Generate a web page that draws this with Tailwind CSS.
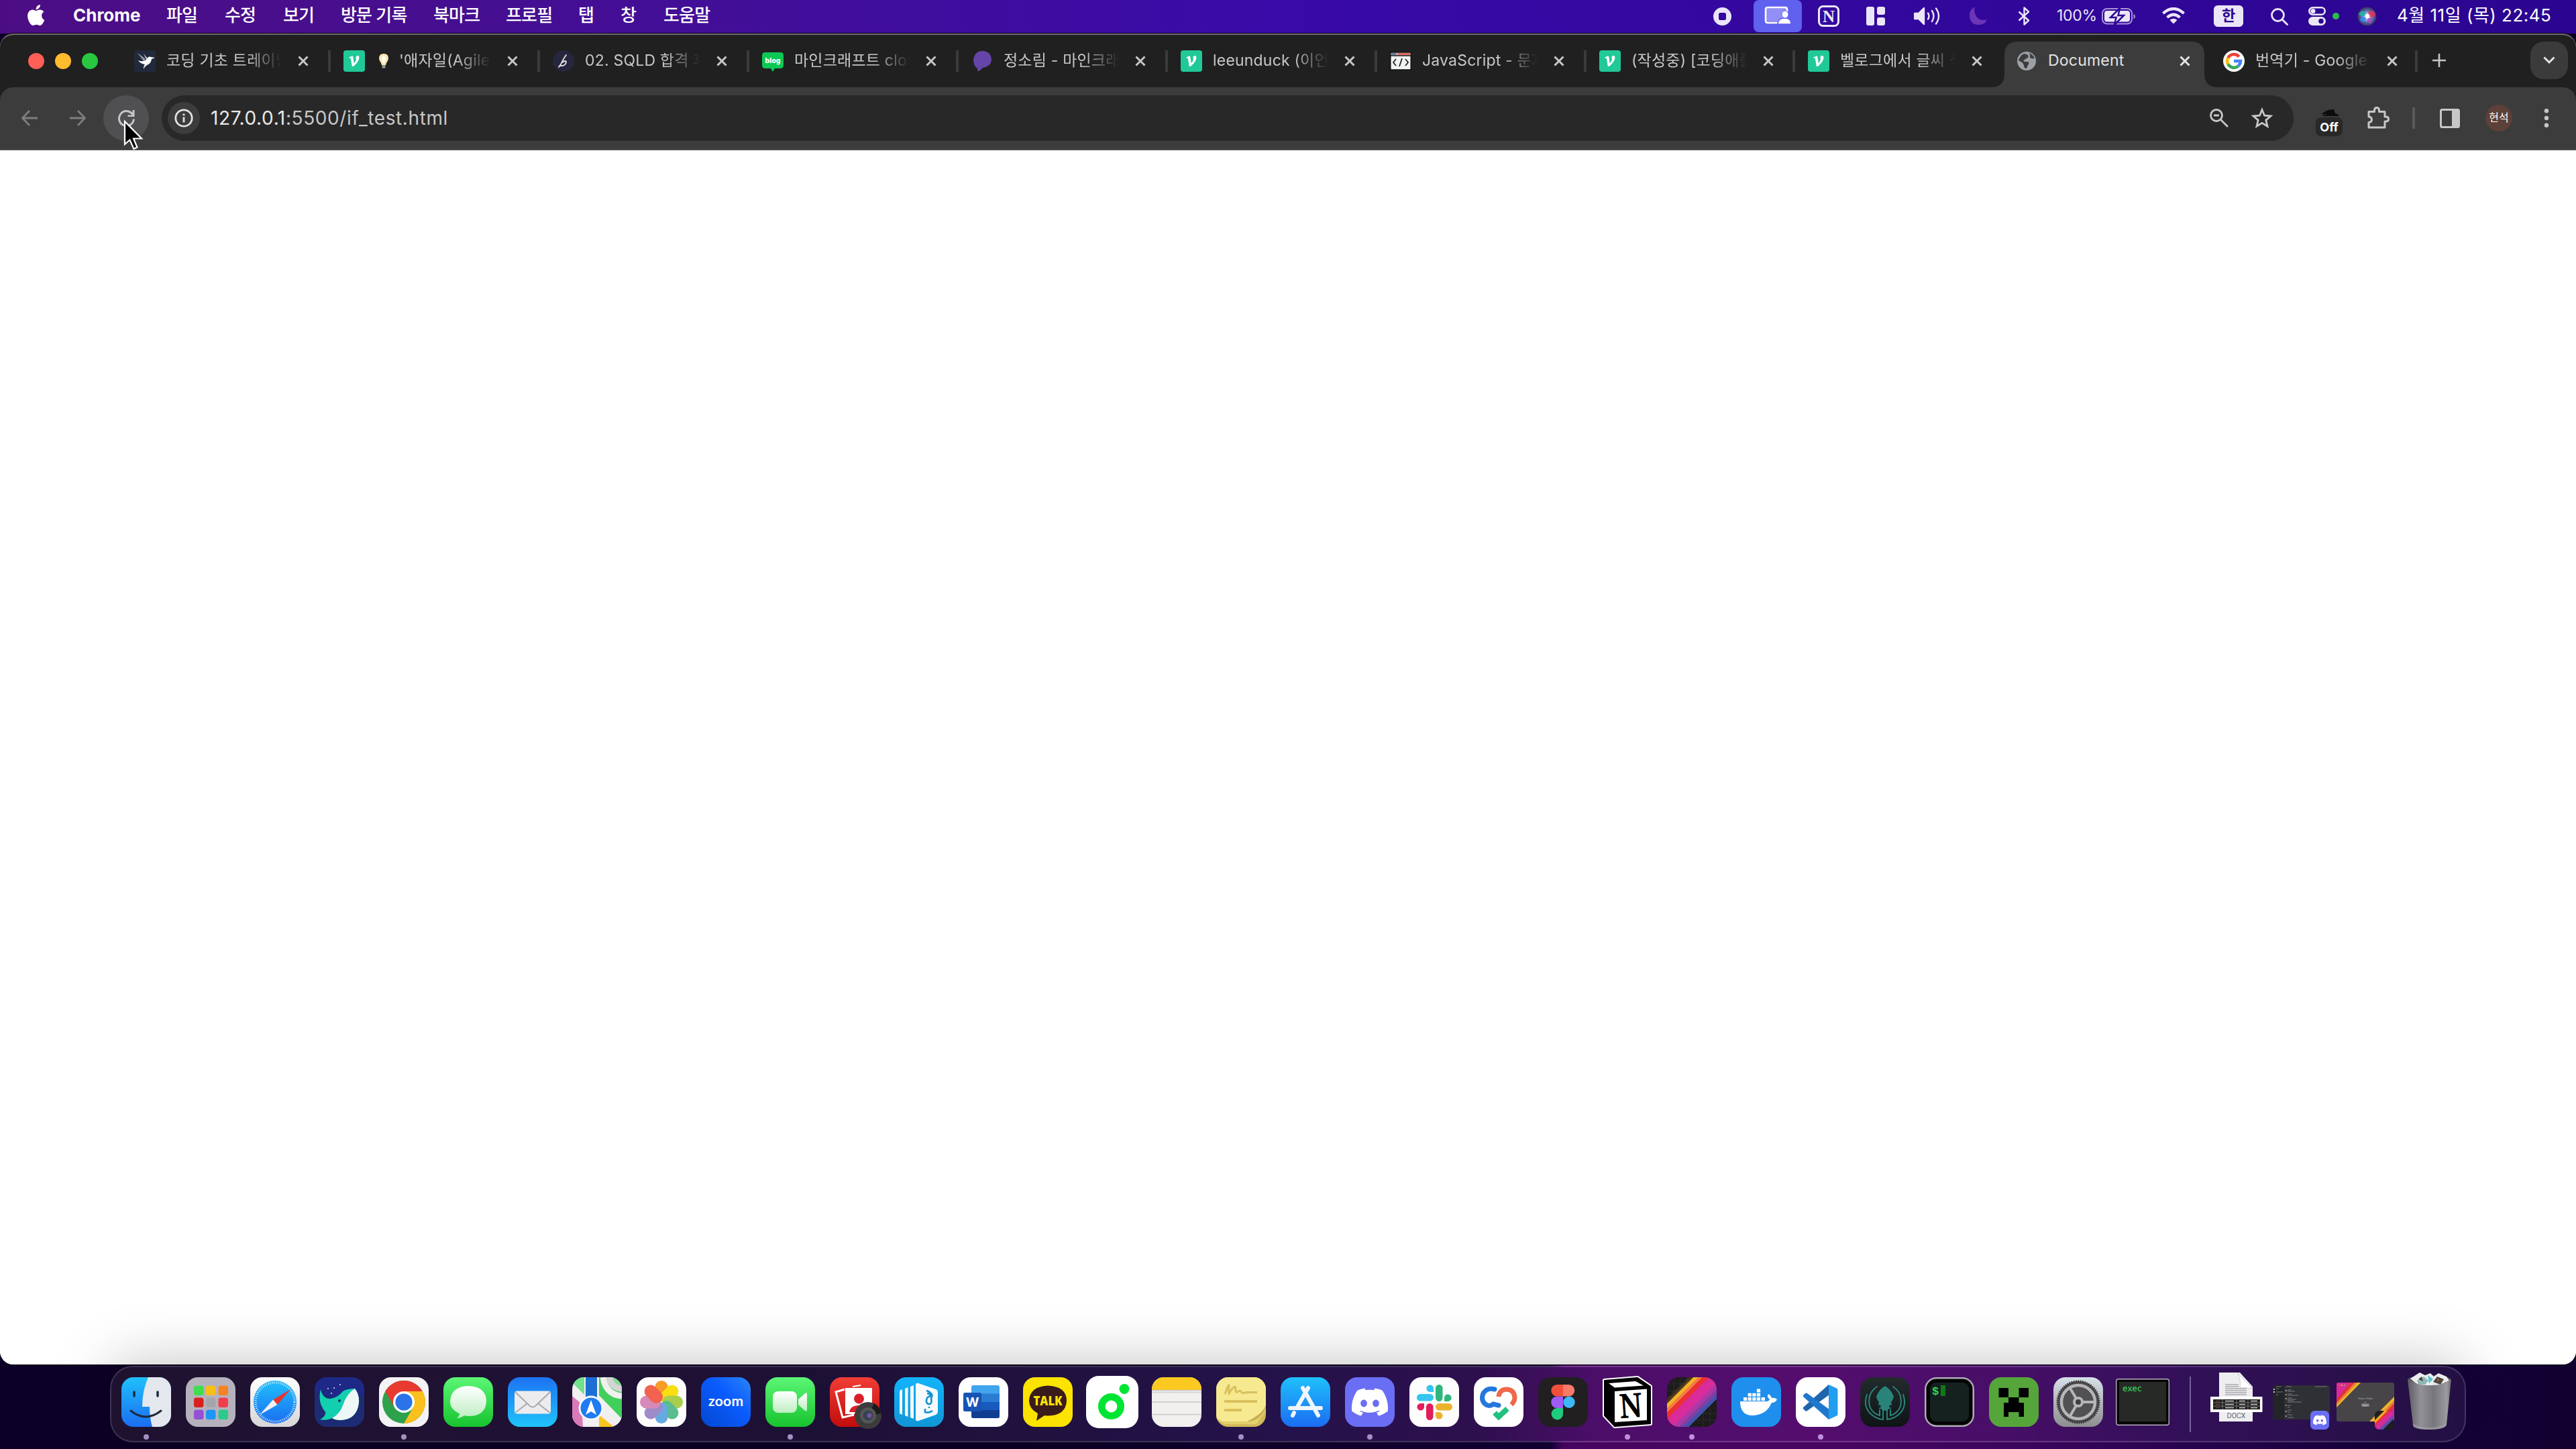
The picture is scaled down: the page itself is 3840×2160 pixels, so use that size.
<!DOCTYPE html>
<html lang="ko">
<head>
    <meta charset="UTF-8">
    <meta name="viewport" content="width=device-width, initial-scale=1.0">
    <title>Document</title>
    <script src="https://cdn.jsdelivr.net/npm/@tailwindcss/browser@4"></script>
</head>
<body class="relative flex flex-col w-[3840px] h-[2160px] overflow-hidden bg-[#0d0027] font-['Inter','Noto_Sans_CJK_KR',sans-serif]">

    <!-- Shared symbols -->
    <svg class="hidden">
        <symbol id="close" viewBox="0 0 16 16"><path d="M1.5 1.5 14.5 14.5M14.5 1.5 1.5 14.5" fill="none" stroke="currentColor" stroke-width="3"/></symbol>
        <symbol id="velog" viewBox="0 0 32 32"><rect width="32" height="32" rx="4" fill="#20c997"/><path d="M8.5 10.500 12.600 8.500Q14 8.200 14.300 9.800L15.800 19.500Q19.800 14.600 18.600 11Q18.400 8.200 21 8Q23.800 8.200 23.400 11.600Q22.600 17.600 14.800 24L12.800 24L10.800 11.700L8.500 11.700Z" fill="#fff"/></symbol>
        <symbol id="discord" viewBox="0 0 24 24"><path fill="#fff" d="M20.317 4.3698a19.7913 19.7913 0 00-4.8851-1.5152.0741.0741 0 00-.0785.0371c-.211.3753-.4447.8648-.6083 1.2495-1.8447-.2762-3.68-.2762-5.4868 0-.1636-.3933-.4058-.8742-.6177-1.2495a.077.077 0 00-.0785-.037 19.7363 19.7363 0 00-4.8852 1.515.0699.0699 0 00-.0321.0277C.5334 9.0458-.319 13.5799.0992 18.0578a.0824.0824 0 00.0312.0561c2.0528 1.5076 4.0413 2.4228 5.9929 3.0294a.0777.0777 0 00.0842-.0276c.4616-.6304.8731-1.2952 1.226-1.9942a.076.076 0 00-.0416-.1057c-.6528-.2476-1.2743-.5495-1.8722-.8923a.077.077 0 01-.0076-.1277c.1258-.0943.2517-.1923.3718-.2914a.0743.0743 0 01.0776-.0105c3.9278 1.7933 8.18 1.7933 12.0614 0a.0739.0739 0 01.0785.0095c.1202.099.246.1981.3728.2924a.077.077 0 01-.0066.1276 12.2986 12.2986 0 01-1.873.8914.0766.0766 0 00-.0407.1067c.3604.698.7719 1.3628 1.225 1.9932a.076.076 0 00.0842.0286c1.961-.6067 3.9495-1.5219 6.0023-3.0294a.077.077 0 00.0313-.0552c.5004-5.177-.8382-9.6739-3.5485-13.6604a.061.061 0 00-.0312-.0286zM8.02 15.3312c-1.1825 0-2.1569-1.0857-2.1569-2.419 0-1.3332.9555-2.4189 2.157-2.4189 1.2108 0 2.1757 1.0952 2.1568 2.419 0 1.3332-.9555 2.4189-2.1569 2.4189zm7.9748 0c-1.1825 0-2.1569-1.0857-2.1569-2.419 0-1.3332.9554-2.4189 2.1569-2.4189 1.2108 0 2.1757 1.0952 2.1568 2.419 0 1.3332-.946 2.4189-2.1568 2.4189Z"/></symbol>
        <symbol id="stripes" viewBox="0 0 74 74"><rect width="74" height="74" fill="#1d1b1c"/><path d="M0 10H74M0 20H74M0 30H74M0 54H74M0 64H74M10 0V74M20 0V74M30 0V74M54 0V74M64 0V74" stroke="#333" stroke-width=".7"/><rect width="74" height="74" fill="url(#g-stripes)"/></symbol>
        <symbol id="petal" viewBox="0 0 74 74"><rect x="27.500" y="5" width="19" height="31" rx="9.500"/></symbol>
    </svg>
    <svg class="absolute size-0">
        <defs>
            <linearGradient id="g-stripes" gradientUnits="userSpaceOnUse" x1="0" y1="0" x2="74" y2="74">
                <stop offset=".2" stop-color="#f4a020" stop-opacity="0"/><stop offset=".265" stop-color="#f4a020" stop-opacity=".3"/>
                <stop offset=".265" stop-color="#f3b327"/><stop offset=".315" stop-color="#f3b327"/>
                <stop offset=".315" stop-color="#f27c3d"/><stop offset=".355" stop-color="#f27c3d"/>
                <stop offset=".355" stop-color="#ea2f35"/><stop offset=".425" stop-color="#ea2f35"/>
                <stop offset=".425" stop-color="#d92b97"/><stop offset=".56" stop-color="#d82d9e"/>
                <stop offset=".56" stop-color="#b236a4"/><stop offset=".62" stop-color="#a63aa5"/>
                <stop offset=".62" stop-color="#8040a4"/><stop offset=".67" stop-color="#7343a5"/>
                <stop offset=".67" stop-color="#4550ab"/><stop offset=".72" stop-color="#3c55ae"/>
                <stop offset=".72" stop-color="#3c55ae" stop-opacity="0"/>
            </linearGradient>
            <linearGradient id="g-blue" x2="0" y2="1"><stop stop-color="#1fc0fb"/><stop offset="1" stop-color="#1b6df2"/></linearGradient>
            <linearGradient id="g-mail" x2="0" y2="1"><stop stop-color="#1d72f2"/><stop offset="1" stop-color="#20c4fb"/></linearGradient>
            <linearGradient id="g-green" x2="0" y2="1"><stop stop-color="#5bf675"/><stop offset="1" stop-color="#18c32f"/></linearGradient>
            <linearGradient id="g-white" x2="0" y2="1"><stop stop-color="#fff"/><stop offset="1" stop-color="#d6d6d8"/></linearGradient>
            <linearGradient id="g-bubble" x2="0" y2="1"><stop stop-color="#fff"/><stop offset="1" stop-color="#bdeec1"/></linearGradient>
            <linearGradient id="g-red" x2="0" y2="1"><stop stop-color="#f03d35"/><stop offset="1" stop-color="#c20d0d"/></linearGradient>
            <linearGradient id="g-book" x2="0" y2="1"><stop stop-color="#14b3fb"/><stop offset="1" stop-color="#1196d6"/></linearGradient>
            <linearGradient id="g-zoom" x1="1" x2="0" y2="1"><stop stop-color="#2a86f5"/><stop offset=".4" stop-color="#0b5cff"/><stop offset="1" stop-color="#0347cf"/></linearGradient>
            <linearGradient id="g-dark" x2="0" y2="1"><stop stop-color="#232b2d"/><stop offset="1" stop-color="#0f1416"/></linearGradient>
            <linearGradient id="g-gear" x2="0" y2="1"><stop stop-color="#d6dfe8"/><stop offset="1" stop-color="#8e8e90"/></linearGradient>
            <linearGradient id="g-trash"><stop stop-color="#5f5f62"/><stop offset=".3" stop-color="#98989b"/><stop offset=".6" stop-color="#7b7b7e"/><stop offset=".9" stop-color="#a2a2a5"/><stop offset="1" stop-color="#6b6b6e"/></linearGradient>
            <radialGradient id="g-siri"><stop stop-color="#fff"/><stop offset=".25" stop-color="#d9c4ee"/><stop offset=".6" stop-color="#5a6fb8"/><stop offset="1" stop-color="#3b3357"/></radialGradient>
        </defs>
    </svg>

    <!-- Menu bar -->
    <header class="flex h-[50px] shrink-0 bg-gradient-to-r from-[#4c0d84] via-[#390aa8] to-[#2b0590] text-[26px] leading-[46px] text-white">
        <div class="flex flex-1 pl-[41px] font-medium">
            <svg class="w-[68px] h-[31px] mt-[7px]" viewBox="2.200 0 52.600 24"><path fill="#fff" d="M12.152 6.896c-.948 0-2.415-1.078-3.96-1.04-2.04.027-3.91 1.183-4.961 3.014-2.117 3.675-.546 9.103 1.519 12.09 1.013 1.454 2.208 3.09 3.792 3.039 1.52-.065 2.09-.987 3.935-.987 1.831 0 2.35.987 3.96.948 1.637-.026 2.676-1.48 3.676-2.948 1.156-1.688 1.636-3.325 1.662-3.415-.039-.013-3.182-1.221-3.22-4.857-.026-3.04 2.48-4.494 2.597-4.559-1.429-2.09-3.623-2.324-4.39-2.376-2-.156-3.675 1.09-4.61 1.09zM15.53 3.83c.843-1.012 1.4-2.427 1.245-3.83-1.207.052-2.662.805-3.532 1.818-.78.896-1.454 2.338-1.273 3.714 1.338.104 2.715-.688 3.559-1.701"/></svg>
            <span class="w-[139px] font-bold">Chrome</span>
            <span class="w-[87px] tracking-[-0.8px]">파일</span>
            <span class="w-[87px] tracking-[-0.8px]">수정</span>
            <span class="w-[86px] tracking-[-0.8px]">보기</span>
            <span class="w-[138px] tracking-[-0.8px]">방문 기록</span>
            <span class="w-[108px] tracking-[-0.8px]">북마크</span>
            <span class="w-[108px] tracking-[-0.8px]">프로필</span>
            <span class="w-[63px]">탭</span>
            <span class="w-[64px]">창</span>
            <span class="tracking-[-0.8px]">도움말</span>
        </div>
        <div class="flex w-[1286px]">
            <svg class="w-[27px] h-[27px] mt-[11px]" viewBox="0 0 27 27"><path fill="#ebe6f7" fill-rule="evenodd" d="M13.500 0a13.500 13.500 0 1 1 0 27a13.500 13.500 0 1 1 0-27ZM10.500 8Q8 8 8 10.500V16.500Q8 19 10.500 19H16.500Q19 19 19 16.500V10.500Q19 8 16.500 8Z"/></svg>
            <div class="flex justify-center w-[72px] h-12 ml-[33px] pt-[9px] rounded-lg bg-[#6061ee]">
                <svg class="w-10 h-7" viewBox="0 0 40 28"><path d="M20 25H5Q2 25 2 22V5Q2 2 5 2H31Q34 2 34 5V8" fill="#928ff5" stroke="#fff" stroke-width="2.600"/><path d="M5 4H31V24H5Z" fill="#928ff5"/><path d="M20 27Q20 18 31 18Q40 18 40 27Z" fill="#fff" stroke="#6061ee" stroke-width="1.500"/><ellipse cx="31" cy="12.500" rx="5" ry="5.500" fill="#fff" stroke="#6061ee"/></svg>
            </div>
            <svg class="w-8 h-8 ml-6 mt-2" viewBox="0 0 32 32"><rect x="1.500" y="1.500" width="29" height="29" rx="6" fill="none" stroke="#ebe6f7" stroke-width="3"/><text x="16" y="24.500" text-anchor="middle" font-family="Liberation Serif" font-weight="bold" font-size="25" fill="#ebe6f7">N</text></svg>
            <svg class="w-7 h-7 ml-10 mt-[10px]" viewBox="0 0 28 28" fill="#ebe6f7"><rect width="12" height="28" rx="3"/><rect x="16" width="12" height="12" rx="3"/><rect x="16" y="16" width="12" height="12" rx="3"/></svg>
            <svg class="w-[39px] h-7 ml-[43px] mt-[10px]" viewBox="0 0 39 28" fill="none" stroke="#ebe6f7" stroke-width="2.400" stroke-linecap="round"><path d="M1 10H7L15 2V26L7 18H1Z" fill="#ebe6f7" stroke-linejoin="round"/><path d="M21 9.500Q24 14 21 18.500M27 6Q32 14 27 22M33 2.500Q41 14 33 25.500"/></svg>
            <svg class="w-[27px] h-7 ml-[43px] mt-[10px]" viewBox="0 0 27 28"><path d="M9 0Q0 5 1 14Q2 27 15 27Q24 27 27 19Q17 22 11.500 15Q6.500 8 9 0Z" fill="#6b35b5"/></svg>
            <svg class="w-[19px] h-7 ml-[46px] mt-[10px]" viewBox="0 0 19 28"><path d="M1.500 7.500 16 20.500 9.500 26.500V1.500L16 7.500 1.500 20.500" fill="none" stroke="#ebe6f7" stroke-width="2.400" stroke-linejoin="round"/></svg>
            <span class="w-[58px] ml-[39px] text-[23px] tracking-[-0.3px] text-[#ebe6f7] whitespace-nowrap">100%</span>
            <svg class="w-[51px] h-[25px] ml-[9px] mt-[12px]" viewBox="0 0 51 25"><rect x="1" y="1" width="44" height="22.500" rx="7" fill="none" stroke="#a893d8" stroke-width="2"/><rect x="4" y="4" width="38" height="16.500" rx="4" fill="#ebe6f7"/><path d="M47.500 8.500Q50 10 50 12.500T47.500 16.500Z" fill="#a893d8"/><path d="M27 0 13 14H21.500L19 25 33 11H24.500Z" fill="#ebe6f7" stroke="#2d0594" stroke-width="2.500"/></svg>
            <svg class="w-[34px] h-[25px] ml-[39px] mt-[11px]" viewBox="0 0 34 25" fill="none" stroke="#ebe6f7" stroke-width="4.200"><path d="M1.500 9Q17-5 32.500 9M7.500 15Q17 6.500 26.500 15"/><path d="M17 24.500 11.500 19Q17 14.500 22.500 19Z" fill="#ebe6f7" stroke="none"/></svg>
            <span class="w-11 h-8 ml-[43px] mt-2 rounded-md bg-[#ebe6f7] text-center text-[22px] leading-[31px] font-bold text-[#2b0590]">한</span>
            <svg class="w-[26px] h-[26px] ml-[41px] mt-[12px]" viewBox="0 0 26 26" fill="none" stroke="#ebe6f7" stroke-width="2.800" stroke-linecap="round"><circle cx="10.500" cy="10.500" r="9"/><path d="M17 17 24.500 24.500"/></svg>
            <svg class="w-[26px] h-7 ml-[30px] mt-[10px]" viewBox="0 0 26 28"><rect x="1.300" y="1.300" width="23.400" height="10.400" rx="5.200" fill="none" stroke="#ebe6f7" stroke-width="2.600"/><circle cx="7" cy="6.500" r="3.500" fill="#ebe6f7"/><rect y="15" width="26" height="13" rx="6.500" fill="#ebe6f7"/><circle cx="19" cy="21.500" r="3.800" fill="#2b0590"/></svg>
            <span class="size-[10px] ml-[10px] mt-[19px] rounded-full bg-[#2bbd4a]"></span>
            <svg class="size-[29px] ml-[27px] mt-[10px]" viewBox="0 0 29 29"><circle cx="14.500" cy="14.500" r="14" fill="url(#g-siri)"/><path d="M2 11Q8 1 15 13Q6 16 2 11Z" fill="#1fb3a4" opacity=".9"/><path d="M14 13Q20 1 26 9Q29 19 14 14Z" fill="#e0365f" opacity=".9"/><path d="M14 15Q10 28 4 20Q5 14 14 15Z" fill="#318af2" opacity=".85"/><path d="M15 15Q26 17 20 25Q14 25 15 15Z" fill="#a848c4" opacity=".8"/><circle cx="15" cy="14" r="3.500" fill="#fff"/></svg>
            <span class="ml-[30px] tracking-[0.5px] whitespace-nowrap">4월 11일 (목) 22:45</span>
        </div>
    </header>

    <!-- Browser window -->
    <main class="flex flex-col h-[1984px] shrink-0 overflow-hidden rounded-[20px] border-t-2 border-[#6d6a72] bg-white shadow-[0_0_0_1px_#0a0512]">
        <div class="flex flex-col shrink-0 h-[172px] bg-[#202020]">
            <div class="flex h-[78px] text-[23px] tracking-[0.2px] text-[#c7c7c7]">
                <div class="flex gap-4 w-[179px] pl-[42px] pt-[27px]">
                    <span class="size-6 rounded-full bg-[#ff5f57]"></span>
                    <span class="size-6 rounded-full bg-[#febc2e]"></span>
                    <span class="size-6 rounded-full bg-[#28c840]"></span>
                </div>

                <div class="flex items-center w-[312px] h-[77px] pl-[21px]">
                    <svg class="size-8 shrink-0" viewBox="0 0 32 32"><rect width="32" height="32" rx="4" fill="#212a3c"/><path d="M5 4 16 12Q17 15 14 16Z" fill="#8e959f"/><path d="M14 5 20 12 18 14Z" fill="#b9bec5"/><path d="M6 15Q13 18 18 14Q21 8 25 10L31 11L26 13Q25 20 19 22Q16 24 14 28Q14 23 16 21Q9 20 6 15Z" fill="#fff"/></svg>
                    <span class="w-[172px] ml-4 overflow-hidden whitespace-nowrap [mask-image:linear-gradient(to_right,black_70%,transparent)]">코딩 기초 트레이닝</span>
                    <svg class="size-4 ml-[24px]"><use href="#close"/></svg>
                    <span class="w-1 h-8 ml-auto mr-[-2px] bg-[#3b3b3b]"></span>
                </div>
                <div class="flex items-center w-[312px] h-[77px] pl-[21px]">
                    <svg class="size-8 shrink-0"><use href="#velog"/></svg>
                    <span class="flex items-center w-[172px] ml-4 overflow-hidden whitespace-nowrap [mask-image:linear-gradient(to_right,black_70%,transparent)]">
                        <svg class="w-[24px] h-6 mr-[11px] shrink-0" viewBox="0 0 24 24"><path d="M12 1Q19 1 19 8Q19 11 16 15L15 18H9L8 15Q5 11 5 8Q5 1 12 1Z" fill="#fde7b0"/><path d="M12 4Q15 5 15 9L13 15H11L9 9Q9 5 12 4Z" fill="#fffdf2"/><path d="M9.500 18H14.500V22Q12 24 9.500 22Z" fill="#8f8f8f"/></svg>
                        '애자일(Agile)
                    </span>
                    <svg class="size-4 ml-[24px]"><use href="#close"/></svg>
                    <span class="w-1 h-8 ml-auto mr-[-2px] bg-[#3b3b3b]"></span>
                </div>
                <div class="flex items-center w-[312px] h-[77px] pl-[21px]">
                    <svg class="size-8 shrink-0" viewBox="0 0 32 32"><circle cx="16" cy="16" r="16" fill="#26263f"/><path d="M20 7Q16 12 11 23Q18 24 20 18Q20 14 14 18M9 25 11 22" fill="none" stroke="#e6e6ea" stroke-width="1.800" stroke-linecap="round"/></svg>
                    <span class="w-[172px] ml-4 overflow-hidden whitespace-nowrap [mask-image:linear-gradient(to_right,black_70%,transparent)]">02. SQLD 합격 후기</span>
                    <svg class="size-4 ml-[24px]"><use href="#close"/></svg>
                    <span class="w-1 h-8 ml-auto mr-[-2px] bg-[#3b3b3b]"></span>
                </div>
                <div class="flex items-center w-[312px] h-[77px] pl-[21px]">
                    <svg class="size-8 shrink-0" viewBox="0 0 32 32"><path d="M5 3H27Q32 3 32 8V22Q32 27 27 27H19L16 32 13 27H5Q0 27 0 22V8Q0 3 5 3Z" fill="#0cc854"/><text x="16" y="19" text-anchor="middle" font-family="Inter" font-weight="800" font-size="10.500" letter-spacing="0" fill="#fff">blog</text></svg>
                    <span class="w-[172px] ml-4 overflow-hidden whitespace-nowrap [mask-image:linear-gradient(to_right,black_70%,transparent)]">마인크래프트 clone</span>
                    <svg class="size-4 ml-[24px]"><use href="#close"/></svg>
                    <span class="w-1 h-8 ml-auto mr-[-2px] bg-[#3b3b3b]"></span>
                </div>
                <div class="flex items-center w-[312px] h-[77px] pl-[21px]">
                    <svg class="size-8 shrink-0" viewBox="0 0 32 32"><path d="M17 1Q30 2 30 15Q29 24 17 26Q13 31 9 31L9 27Q3 23 3 14Q5 1 17 1Z" fill="#6645a8"/></svg>
                    <span class="w-[172px] ml-4 overflow-hidden whitespace-nowrap [mask-image:linear-gradient(to_right,black_70%,transparent)]">정소림 - 마인크래프트</span>
                    <svg class="size-4 ml-[24px]"><use href="#close"/></svg>
                    <span class="w-1 h-8 ml-auto mr-[-2px] bg-[#3b3b3b]"></span>
                </div>
                <div class="flex items-center w-[312px] h-[77px] pl-[21px]">
                    <svg class="size-8 shrink-0"><use href="#velog"/></svg>
                    <span class="w-[172px] ml-4 overflow-hidden whitespace-nowrap [mask-image:linear-gradient(to_right,black_70%,transparent)]">leeunduck (이언덕)</span>
                    <svg class="size-4 ml-[24px]"><use href="#close"/></svg>
                    <span class="w-1 h-8 ml-auto mr-[-2px] bg-[#3b3b3b]"></span>
                </div>
                <div class="flex items-center w-[312px] h-[77px] pl-[21px]">
                    <svg class="size-8 shrink-0" viewBox="0 0 32 32"><rect x=".7" y="3" width="30.600" height="26" rx="1.500" fill="#f2f4f4" stroke="#0c1015" stroke-width="1.600"/><path d="M1.500 4H10V7H1.500Z" fill="#6f7f91"/><path d="M11 4H30.500V7H11Z" fill="#e26a63"/><path d="M0 8H32" stroke="#0c1015" stroke-width="1.500"/><path d="M9 13 5 18 9 23M23 13 27 18 23 23M18 12 14 24" fill="none" stroke="#222" stroke-width="1.800"/></svg>
                    <span class="w-[172px] ml-4 overflow-hidden whitespace-nowrap [mask-image:linear-gradient(to_right,black_70%,transparent)]">JavaScript - 문자열</span>
                    <svg class="size-4 ml-[24px]"><use href="#close"/></svg>
                    <span class="w-1 h-8 ml-auto mr-[-2px] bg-[#3b3b3b]"></span>
                </div>
                <div class="flex items-center w-[312px] h-[77px] pl-[21px]">
                    <svg class="size-8 shrink-0"><use href="#velog"/></svg>
                    <span class="w-[172px] ml-4 overflow-hidden whitespace-nowrap [mask-image:linear-gradient(to_right,black_70%,transparent)]">(작성중) [코딩애플]</span>
                    <svg class="size-4 ml-[24px]"><use href="#close"/></svg>
                    <span class="w-1 h-8 ml-auto mr-[-1px] bg-[#3b3b3b]"></span>
                </div>
                <div class="flex items-center w-[309px] h-[77px] pl-[20px]">
                    <svg class="size-8 shrink-0"><use href="#velog"/></svg>
                    <span class="w-[172px] ml-4 overflow-hidden whitespace-nowrap [mask-image:linear-gradient(to_right,black_70%,transparent)]">벨로그에서 글씨 색</span>
                    <svg class="size-4 ml-[24px]"><use href="#close"/></svg>
                </div>
                <!-- Active tab -->
                <div class="relative flex items-center w-[309px] h-[77px] pl-[21px] text-[#e3e3e3]">
                    <svg class="absolute left-[-16px] top-[10px] w-[342px] h-[68px]" viewBox="0 0 342 68"><path d="M0 68Q20 68 20 48V20Q20 0 40 0H298Q318 0 318 20V48Q318 68 338 68Z" fill="#3c3c3c"/></svg>
                    <svg class="relative size-8 shrink-0" viewBox="0 0 32 32"><circle cx="16" cy="16" r="14" fill="#9aa0a6"/><path d="M6 11Q8 6 13 5L18 7Q20 10 16 12L13 14Q10 15 13 17L18 17Q21 19 18 22L16 27Q12 27 12 23Q12 20 9 18L4 15Q4 13 6 11ZM20 4Q25 6 28 12Q24 13 21 11Q22 8 20 4Z" fill="#3c3c3c"/></svg>
                    <span class="relative w-[172px] ml-4 overflow-hidden whitespace-nowrap">Document</span>
                    <svg class="relative size-4 ml-[24px]"><use href="#close"/></svg>
                </div>
                <div class="flex items-center w-[309px] h-[77px] pl-[21px]">
                    <svg class="size-8 shrink-0" viewBox="0 0 32 32"><circle cx="16" cy="16" r="16" fill="#fff"/><g fill="none" stroke-width="4.500"><path d="M23.800 9.500A10 10 0 0 0 7.300 11.300" stroke="#ea4335"/><path d="M7.300 11.300A10 10 0 0 0 7.300 20.700" stroke="#fbbc05"/><path d="M7.300 20.700A10 10 0 0 0 22.500 23.500" stroke="#34a853"/><path d="M22.500 23.500A10 10 0 0 0 26 16H16" stroke="#4285f4"/></g></svg>
                    <span class="w-[172px] ml-4 overflow-hidden whitespace-nowrap [mask-image:linear-gradient(to_right,black_70%,transparent)]">번역기 - Google 검색</span>
                    <svg class="size-4 ml-[24px]"><use href="#close"/></svg>
                    <span class="w-1 h-8 ml-auto mr-[-2px] bg-[#3b3b3b]"></span>
                </div>
                <svg class="size-5 ml-[24px] mt-[28px]" viewBox="0 0 20 20"><path d="M10 0V20M0 10H20" stroke="#c7c7c7" stroke-width="2.600"/></svg>
                <div class="flex items-center justify-center size-14 ml-auto mr-3 mt-[10px] rounded-[20px] bg-[#3b3b3b]">
                    <svg class="w-[18px] h-3" viewBox="0 0 18 12"><path d="M1.500 1.500 9 9 16.500 1.500" fill="none" stroke="#e3e3e3" stroke-width="3"/></svg>
                </div>
            </div>

            <!-- Toolbar -->
            <div class="flex items-center h-[94px] rounded-t-[20px] border-b-2 border-[#474747] bg-[#3c3c3c]">
                <svg class="w-6 h-6 ml-8" viewBox="0 0 24 24"><path d="M12 1 1.500 12 12 23M1.500 12H24" fill="none" stroke="#7d7d7d" stroke-width="2.800"/></svg>
                <svg class="w-6 h-6 ml-12" viewBox="0 0 24 24"><path d="M12 1 22.500 12 12 23M22.500 12H0" fill="none" stroke="#7d7d7d" stroke-width="2.800"/></svg>
                <div class="flex items-center justify-center size-[68px] ml-[26px] rounded-full bg-[#505052]">
                    <svg class="size-[27px]" viewBox="0 0 27 27"><path d="M23 8A11 11 0 1 0 24.500 14.500" fill="none" stroke="#c7c7c7" stroke-width="3"/><path d="M25.500 1V11H15.500V8.500H22.500V1Z" fill="#c7c7c7"/></svg>
                </div>
                <div class="flex items-center w-[3178px] h-[68px] ml-[19px] pl-[9px] rounded-full bg-[#282828]">
                    <div class="flex items-center justify-center size-12 rounded-full bg-[#3c3c3c]">
                        <svg class="size-7" viewBox="0 0 28 28"><circle cx="14" cy="14" r="12.200" fill="none" stroke="#e3e3e3" stroke-width="2.800"/><path d="M14 12.500V20.500M14 7.500V10.300" stroke="#e3e3e3" stroke-width="2.800"/></svg>
                    </div>
                    <span class="ml-4 text-[28px] tracking-[0.6px] text-[#c7c7c7]"><span class="text-[#e8e8e8]">127.0.0.1</span>:5500/if_test.html</span>
                    <svg class="size-7 ml-auto" viewBox="0 0 28 28" fill="none" stroke="#c7c7c7" stroke-width="2.800"><circle cx="10" cy="10" r="8.500"/><path d="M16 16 27 27M6 10H14"/></svg>
                    <svg class="size-8 ml-[34px] mr-[31px]" viewBox="0 0 32 32"><path d="M16 3.500 19.600 12.200 29 13 21.800 19.100 24 28.300 16 23.300 8 28.300 10.200 19.100 3 13 12.400 12.200Z" fill="none" stroke="#c7c7c7" stroke-width="2.800"/></svg>
                </div>
                <svg class="w-10 h-11 ml-[33px] mt-[13px]" viewBox="0 0 40 44"><path d="M9 10Q14 2 27 2L29 8 34 10V12H9L18 9Z" fill="#0c0c0c"/><rect y="14" width="40" height="28" rx="8" fill="#282828"/><text x="20" y="35" text-anchor="middle" font-family="Inter" font-weight="700" font-size="18" fill="#fff">Off</text></svg>
                <svg class="w-[34px] h-[34px] ml-[36px]" viewBox="0 0 34 34"><path d="M3 7.500H11.500V5.500Q11.500 1.500 15 1.500T18.500 5.500V7.500H27V15H28.500Q32.500 15 32.500 18.500T28.500 22H27V31H3V23.500Q7.500 23 7.500 19.200T3 15Z" fill="none" stroke="#c7c7c7" stroke-width="3" stroke-linejoin="round"/></svg>
                <span class="w-1 h-8 ml-[34px] bg-[#5a5a5a]"></span>
                <svg class="w-[30px] h-[29px] ml-[37px]" viewBox="0 0 30 29"><rect x="1.500" y="1.500" width="27" height="26" rx="2" fill="none" stroke="#c7c7c7" stroke-width="3"/><rect x="18" y="2" width="10" height="25" fill="#c7c7c7"/></svg>
                <span class="size-10 ml-[38px] rounded-full bg-[#5d4037] text-center text-[16px] leading-[39px] text-white">현석</span>
                <svg class="w-2 h-7 ml-[47px]" viewBox="0 0 8 28" fill="#c7c7c7"><circle cx="4" cy="3.200" r="3.200"/><circle cx="4" cy="14" r="3.200"/><circle cx="4" cy="24.800" r="3.200"/></svg>
            </div>
        </div>
        <div class="flex-1 bg-white"></div>
    </main>

    <!-- Desktop strip under the window -->
    <div class="absolute left-0 bottom-0 w-[3840px] h-[160px] -z-10 bg-[linear-gradient(to_right,#0d0027_0%,#0d0029_40%,#14003a_60.200%,#4f066c_60.700%,#52076e_70%,#44066a_78%,#2a0456_86%,#170040_92%,#12002f_100%)]"></div>

    <!-- Dock -->
    <nav class="absolute left-[164px] top-[2036px] flex w-[3512px] h-[114px] pl-1 rounded-[34px] border-2 border-white/20 bg-clip-padding bg-[linear-gradient(to_right,#1f1230_0%,#1d1035_30%,#24124a_50%,#2d0f4e_58%,#4b0e68_63%,#540d6e_72%,#480e68_80%,#321058_88%,#231042_100%)] shadow-[0_0_90px_rgba(0,0,0,0.26)]">
        <!-- Finder -->
        <div class="flex flex-col items-center w-24 pt-[15px]">
            <svg class="size-[74px] rounded-[18px]" viewBox="0 0 74 74"><rect width="74" height="74" fill="url(#g-blue)"/><path d="M40 0Q31 20 31 44H42Q42 60 46 74H74V0Z" fill="#e4e7ee"/><path d="M19 22V28M54 22V28" stroke="#1b2b3c" stroke-width="3.500" stroke-linecap="round"/><path d="M14 50Q36 68 59 50" fill="none" stroke="#1b2b3c" stroke-width="3" stroke-linecap="round"/></svg>
            <span class="size-2 mt-[11px] rounded-full bg-[#a48fc0]"></span>
        </div>
        <!-- Launchpad -->
        <div class="flex flex-col items-center w-24 pt-[15px]">
            <svg class="size-[74px] rounded-[18px]" viewBox="0 0 74 74"><rect width="74" height="74" fill="#b5b2bd"/><rect x="12" y="12.500" width="14.500" height="14.500" rx="3.500" fill="#3fdd4f"/><rect x="30" y="12.500" width="14.500" height="14.500" rx="3.500" fill="#f9bf15"/><rect x="48.500" y="12.500" width="14.500" height="14.500" rx="3.500" fill="#f48421"/><rect x="12" y="30.500" width="14.500" height="14.500" rx="3.500" fill="#d8211f"/><rect x="30" y="30.500" width="14.500" height="14.500" rx="3.500" fill="#a5a6aa"/><rect x="48.500" y="30.500" width="14.500" height="14.500" rx="3.500" fill="#f33d4d"/><rect x="12" y="48.500" width="14.500" height="14.500" rx="3.500" fill="#9650d5"/><rect x="30" y="48.500" width="14.500" height="14.500" rx="3.500" fill="#1f95f5"/><rect x="48.500" y="48.500" width="14.500" height="14.500" rx="3.500" fill="#2bc98a"/></svg>
        </div>
        <!-- Safari -->
        <div class="flex flex-col items-center w-24 pt-[15px]">
            <svg class="size-[74px] rounded-[18px]" viewBox="0 0 74 74"><rect width="74" height="74" fill="url(#g-white)"/><circle cx="37" cy="37" r="32" fill="url(#g-blue)"/><circle cx="37" cy="37" r="29" fill="none" stroke="#d9efff" stroke-width="3.500" stroke-dasharray="1 2"/><path d="M60 18 34 33.500 40.500 41Z" fill="#e8352d"/><path d="M14 56 34 33.500 40.500 41Z" fill="#f1f1f3"/></svg>
        </div>
        <!-- Whale -->
        <div class="flex flex-col items-center w-24 pt-[15px]">
            <svg class="size-[74px] rounded-[18px]" viewBox="0 0 74 74"><rect width="74" height="74" fill="#1d2b74"/><path d="M0 0H74V25Q40 40 0 20Z" fill="#20269a" opacity=".5"/><path d="M9 18Q12 32 23 32Q34 31 42 21Q48 17 60 17Q66 24 66 36Q64 64 37 64Q30 64 26 61Q18 65 8 63Q17 58 16 52Q4 38 9 18Z" fill="#12cfb0"/><path d="M60 17Q67 26 66 38Q63 64 37 64Q31 64 26 61Q38 54 42 42Q48 24 60 17Z" fill="#eef7f6"/><circle cx="37" cy="35" r="2" fill="#16306b"/><g fill="#fff"><circle cx="20" cy="17" r=".9"/><circle cx="29" cy="16" r=".9"/><circle cx="38" cy="11" r=".9"/><circle cx="25" cy="24" r=".9"/></g></svg>
        </div>
        <!-- Chrome -->
        <div class="flex flex-col items-center w-24 pt-[15px]">
            <svg class="size-[74px] rounded-[18px]" viewBox="0 0 74 74"><rect width="74" height="74" fill="#f3f3f5"/><circle cx="37" cy="37" r="32" fill="#2da14c"/><path d="M9.300 21A32 32 0 0 1 64.700 21H37L23.100 45Z" fill="#e83a30"/><path d="M64.700 21A32 32 0 0 1 37 69L50.900 45L37 21Z" fill="#fbc01d"/><circle cx="37" cy="37" r="16" fill="#fff"/><circle cx="37" cy="37" r="12.600" fill="#2a73e8"/></svg>
            <span class="size-2 mt-[11px] rounded-full bg-[#a48fc0]"></span>
        </div>
        <!-- Messages -->
        <div class="flex flex-col items-center w-24 pt-[15px]">
            <svg class="size-[74px] rounded-[18px]" viewBox="0 0 74 74"><rect width="74" height="74" fill="url(#g-green)"/><path d="M37 13Q64 14 64 36Q63 58 37 58Q33 58 31 57Q26 61 20 61Q24 58 24 54Q10 48 10 36Q11 14 37 13Z" fill="url(#g-bubble)"/></svg>
        </div>
        <!-- Mail -->
        <div class="flex flex-col items-center w-24 pt-[15px]">
            <svg class="size-[74px] rounded-[18px]" viewBox="0 0 74 74"><rect width="74" height="74" fill="url(#g-mail)"/><rect x="10" y="20.500" width="54" height="34" rx="3.500" fill="#ececee"/><path d="M11 22 33 43Q37 46 41 43L63 22M11 53 29 39M63 53 45 39" fill="none" stroke="#a9a9ad" stroke-width="2"/></svg>
        </div>
        <!-- Maps -->
        <div class="flex flex-col items-center w-24 pt-[15px]">
            <svg class="size-[74px] rounded-[18px]" viewBox="0 0 74 74"><rect width="74" height="74" fill="#f1efef"/><path d="M0 0H18V26L0 8Z" fill="#6fe28b"/><path d="M0 28 14 40 16 74H0Z" fill="#d979b8"/><path d="M40 0H74V62L40 27Z" fill="#41cf5c"/><path d="M46 0Q50 26 74 28" fill="none" stroke="#f1efef" stroke-width="9"/><path d="M50 0Q54 20 74 22V0Z" fill="#d4d4d5"/><path d="M60 0Q62 11 74 13V0Z" fill="#7fdc93"/><path d="M40 56 62 74H40Z" fill="#f9c51d"/><path d="M20 0H37V40H20Z" fill="#1d6fd4"/><circle cx="28" cy="46" r="18.500" fill="#f4f6fa"/><circle cx="28" cy="46" r="15.500" fill="#1f7cf3"/><path d="M28 34 36 56 28 51 20 56Z" fill="#fff"/></svg>
        </div>
        <!-- Photos -->
        <div class="flex flex-col items-center w-24 pt-[15px]">
            <svg class="size-[74px] rounded-[18px]" viewBox="0 0 74 74"><rect width="74" height="74" fill="#fdfdfd"/><g opacity=".95"><use href="#petal" fill="#f7961d"/><use href="#petal" fill="#fbdd05" transform="rotate(45 37 37)"/><use href="#petal" fill="#a5cc45" transform="rotate(90 37 37)"/><use href="#petal" fill="#52b98a" transform="rotate(135 37 37)"/><use href="#petal" fill="#5da6e0" transform="rotate(180 37 37)"/><use href="#petal" fill="#9a85c4" transform="rotate(225 37 37)"/><use href="#petal" fill="#d584b4" transform="rotate(270 37 37)"/><use href="#petal" fill="#f25a48" transform="rotate(315 37 37)"/></g></svg>
        </div>
        <!-- Zoom -->
        <div class="flex flex-col items-center w-24 pt-[15px]">
            <svg class="size-[74px] rounded-[18px]" viewBox="0 0 74 74"><rect width="74" height="74" fill="url(#g-zoom)"/><text x="37" y="43" text-anchor="middle" font-family="Lato" font-weight="700" font-size="21" textLength="52" fill="#fff">zoom</text></svg>
        </div>
        <!-- FaceTime -->
        <div class="flex flex-col items-center w-24 pt-[15px]">
            <svg class="size-[74px] rounded-[18px]" viewBox="0 0 74 74"><rect width="74" height="74" fill="url(#g-green)"/><rect x="11" y="21" width="36" height="32" rx="8" fill="url(#g-bubble)"/><path d="M49 33 59 24Q62 22 62 26V48Q62 52 59 50L49 41Z" fill="url(#g-bubble)"/></svg>
            <span class="size-2 mt-[11px] rounded-full bg-[#a48fc0]"></span>
        </div>
        <!-- Photo Booth -->
        <div class="flex flex-col items-center w-24 pt-[15px]">
            <svg class="size-[74px] overflow-visible" viewBox="0 0 74 74"><rect width="74" height="74" rx="18" fill="url(#g-red)"/><path d="M22 18 9 22 19 60 36 56" fill="none" stroke="#fff" stroke-width="3"/><path d="M34 14 46 12" stroke="#fff" stroke-width="2"/><rect x="23" y="16" width="40" height="39" fill="#fff"/><circle cx="43.500" cy="32" r="7.500" fill="#d9202a"/><path d="M29 52Q31 42 43 42T58 52Z" fill="#d9202a"/><circle cx="57" cy="57" r="20" fill="#3c3c3e"/><path d="M57 57 66 39Q75 44 77 54Z" fill="#1b1b1c"/><circle cx="57" cy="57" r="12" fill="#555557"/><circle cx="57" cy="57" r="7.500" fill="#35424e"/><circle cx="59" cy="57" r="3.500" fill="#7a4fa0"/></svg>
        </div>
        <!-- Millie -->
        <div class="flex flex-col items-center w-24 pt-[15px]">
            <svg class="size-[74px] rounded-[18px]" viewBox="0 0 74 74"><rect width="74" height="74" fill="url(#g-book)"/><path d="M8 20 12 18V56L8 54ZM16 17 20.500 15V59L16 57ZM24 14 29 12V62L24 60ZM32 11Q32 8 36 9L62 18Q65 19 65 22V52Q65 54 62 56L36 65Q32 66 32 63Z" fill="#f4fafd"/><path d="M48 20Q55 22 57 28M49 24Q56 25 55 31Q57 41 51 40Q46 38 49 31Q53 26 57 30M46 47V52Q52 54 57 50M52 44V46" fill="none" stroke="#1590cd" stroke-width="2.600"/></svg>
        </div>
        <!-- Word -->
        <div class="flex flex-col items-center w-24 pt-[15px]">
            <svg class="size-[74px] rounded-[18px]" viewBox="0 0 74 74"><rect width="74" height="74" fill="#fff"/><rect x="19" y="12" width="42" height="49" rx="3" fill="#41a5ee"/><path d="M19 24.500H61V37H19Z" fill="#2b7cd3"/><path d="M19 37H61V49H19Z" fill="#185abd"/><path d="M19 49H61V58Q61 61 58 61H22Q19 61 19 58Z" fill="#103f91"/><rect x="7" y="23" width="27" height="28" rx="2.500" fill="#1853b4"/><text x="20.500" y="44" text-anchor="middle" font-family="Inter" font-weight="700" font-size="19" fill="#fff">W</text></svg>
        </div>
        <!-- KakaoTalk -->
        <div class="flex flex-col items-center w-24 pt-[15px]">
            <svg class="size-[74px] rounded-[18px]" viewBox="0 0 74 74"><rect width="74" height="74" fill="#fce300"/><path d="M37 12.500Q65 14 65 35Q64 57 37 57.500L32 57 20 65 22 54Q9 47 9 35Q10 14 37 12.500Z" fill="#391b1b"/><text x="37" y="42" text-anchor="middle" font-family="Open Sans" font-weight="800" font-size="18.500" textLength="43" lengthAdjust="spacingAndGlyphs" fill="#fce300">TALK</text></svg>
        </div>
        <!-- Green ring -->
        <div class="flex flex-col items-center w-24 pt-[13px]">
            <svg class="size-[78px] rounded-[19px]" viewBox="0 0 78 78"><rect width="78" height="78" fill="#fff"/><circle cx="37.500" cy="45.500" r="14.200" fill="none" stroke="#00e533" stroke-width="10.600"/><circle cx="57" cy="19.500" r="7.500" fill="#00e533"/></svg>
        </div>
        <!-- Notes -->
        <div class="flex flex-col items-center w-24 pt-[15px]">
            <svg class="size-[74px] rounded-[18px]" viewBox="0 0 74 74"><rect width="74" height="74" fill="#f1f0ef"/><path d="M0 0H74V19H0Z" fill="#fbc91f"/><path d="M0 19.500H74M0 37H74M0 55.500H74" stroke="#c9c8c8" stroke-width="1.400"/><path d="M1 22.500H74" stroke="#b2b1b1" stroke-width="1.300" stroke-dasharray="1.300 1.300"/></svg>
        </div>
        <!-- Stickies -->
        <div class="flex flex-col items-center w-24 pt-[15px]">
            <svg class="size-[74px] rounded-[18px]" viewBox="0 0 74 74"><rect width="74" height="74" fill="#d2b95b"/><path d="M0 0H74V50L60 70H12L0 62Z" fill="#e3cf6e"/><path d="M0 0H74V42Q60 64 46 66H14Q0 66 0 54Z" fill="#f7e98f"/><path d="M74 42Q70 54 46 66Q64 66 74 46Z" fill="#c8ae4f"/><path d="M13 25Q20 6 19 14Q18 20 19 24Q28 10 29 16Q28 24 32 22Q36 18 38 23Q42 24 46 22.500H61" fill="none" stroke="#d9c15e" stroke-width="3"/><path d="M12 36H61M12 49H38" stroke="#d9c15e" stroke-width="4"/></svg>
            <span class="size-2 mt-[11px] rounded-full bg-[#a48fc0]"></span>
        </div>
        <!-- App Store -->
        <div class="flex flex-col items-center w-24 pt-[15px]">
            <svg class="size-[74px] rounded-[18px]" viewBox="0 0 74 74"><rect width="74" height="74" fill="url(#g-blue)"/><path d="M41 16 24 46M20 53 18 57M33 16 56 57M14 46H60" fill="none" stroke="#f1f6fc" stroke-width="6" stroke-linecap="round"/></svg>
        </div>
        <!-- Discord -->
        <div class="flex flex-col items-center w-24 pt-[15px]">
            <svg class="size-[74px] rounded-[18px]" viewBox="0 0 74 74"><rect width="74" height="74" fill="#6a6ef4"/><use href="#discord" x="10" y="10" width="54" height="54"/></svg>
            <span class="size-2 mt-[11px] rounded-full bg-[#a48fc0]"></span>
        </div>
        <!-- Slack -->
        <div class="flex flex-col items-center w-24 pt-[15px]">
            <svg class="size-[74px] rounded-[18px]" viewBox="0 0 74 74"><rect width="74" height="74" fill="#fdfdfd"/><g fill="#36c5f0"><rect x="11" y="25" width="25" height="10.500" rx="5.200"/><path d="M36 22H30.500A5.300 5.300 0 1 1 36 16.500Z"/></g><g fill="#2eb67d"><rect x="39" y="11" width="10.500" height="25" rx="5.200"/><path d="M52 36V30.500A5.300 5.300 0 1 1 57.500 36Z"/></g><g fill="#ecb22e"><rect x="39" y="39" width="25" height="10.500" rx="5.200"/><path d="M39 52H44.500A5.300 5.300 0 1 1 39 57.500Z"/></g><g fill="#e01e5a"><rect x="25" y="39" width="10.500" height="25" rx="5.200"/><path d="M22 39V44.500A5.300 5.300 0 1 1 16.500 39Z"/></g></svg>
        </div>
        <!-- Heart check -->
        <div class="flex flex-col items-center w-24 pt-[15px]">
            <svg class="size-[74px] rounded-[18px]" viewBox="0 0 74 74" fill="none" stroke-width="7"><rect width="74" height="74" fill="#fff"/><path d="M31 18Q20 15 14 24Q10 34 17 40Q23 45 29 40L37 42" stroke="#2478dd" stroke-linecap="round"/><path d="M37 29Q38 19 48 18Q60 18 61 30Q61 36 56 41" stroke="#f0674a"/><path d="M31 53 37 59 50 47" stroke="#22c07f" stroke-width="8"/></svg>
        </div>
        <!-- Figma -->
        <div class="flex flex-col items-center w-24 pt-[15px]">
            <svg class="size-[74px] rounded-[18px]" viewBox="0 0 74 74"><rect width="74" height="74" fill="#211f20"/><path d="M28 11H37V28.500H28A8.700 8.700 0 0 1 28 11Z" fill="#f0503a"/><path d="M37 11H45.500A8.700 8.700 0 0 1 45.500 28.500H37Z" fill="#fa7a68"/><path d="M28 28.500H37V46H28A8.700 8.700 0 0 1 28 28.500Z" fill="#9f5bf5"/><circle cx="46" cy="37.200" r="8.700" fill="#3db8f8"/><path d="M28 46H37V54.500A8.700 8.700 0 1 1 28 46Z" fill="#1fcb7d"/></svg>
        </div>
        <!-- Notion -->
        <div class="flex flex-col items-center w-24 pt-[15px]">
            <svg class="size-[74px] overflow-visible" viewBox="0 0 74 74"><path d="M3 5 52 1 71 14V69L18 73 3 57Z" stroke="#fff" stroke-width="6" stroke-linejoin="round" fill="#000"/><path d="M3 5 52 1 71 14V69L18 73 3 57Z" stroke="#000" stroke-width="2" stroke-linejoin="round"/><path d="M9 9 49 6 61 12.500 18 15.500ZM18 21 66 17.500V64L18 67Z" fill="#fff"/><text x="42" y="60" text-anchor="middle" font-family="Noto Serif, Liberation Serif" font-weight="bold" font-size="50" textLength="34" lengthAdjust="spacingAndGlyphs" transform="rotate(-4 42 43)">N</text></svg>
            <span class="size-2 mt-[11px] rounded-full bg-[#c08ddb]"></span>
        </div>
        <!-- Video editor -->
        <div class="flex flex-col items-center w-24 pt-[15px]">
            <svg class="size-[74px] rounded-[18px]"><use href="#stripes"/></svg>
            <span class="size-2 mt-[11px] rounded-full bg-[#c08ddb]"></span>
        </div>
        <!-- Docker -->
        <div class="flex flex-col items-center w-24 pt-[15px]">
            <svg class="size-[74px] rounded-[18px]" viewBox="0 0 74 74"><rect width="74" height="74" fill="#1f8fed"/><path d="M13 36H52Q56 36 57 33Q52 29 55 25Q59 27 60 31Q65 30 68 33Q66 38 60 38Q52 57 30 57Q13 56 13 36Z" fill="#fff"/><path d="M18 30H23.300V35H18ZM24.600 30H29.900V35H24.600ZM31.200 30H36.500V35H31.200ZM37.800 30H43.100V35H37.800ZM44.600 30H50V35H44.600ZM24.600 23.700H29.900V28.700H24.600ZM31.200 23.700H36.500V28.700H31.200ZM37.800 23.700H43.100V28.700H37.800ZM37.800 17.400H43.100V22.400H37.800Z" fill="#fff"/></svg>
        </div>
        <!-- VS Code -->
        <div class="flex flex-col items-center w-24 pt-[15px]">
            <svg class="size-[74px] rounded-[18px]" viewBox="0 0 74 74"><rect width="74" height="74" fill="#fff"/><path d="M49 11 11 45Q10 47 12 48L14 50Q15 51 17 50L50 26Z" fill="#1f65ab"/><path d="M49 63 11 29Q10 27 12 26L14 24Q15 23 17 24L50 48Z" fill="#1f78cc"/><path d="M49 11 61 16.500Q62.500 17.500 62.500 19V55Q62.500 56.500 61 57.500L49 63Z" fill="#239df0"/></svg>
            <span class="size-2 mt-[11px] rounded-full bg-[#c08ddb]"></span>
        </div>
        <!-- GitKraken -->
        <div class="flex flex-col items-center w-24 pt-[15px]">
            <svg class="size-[74px] rounded-[18px]" viewBox="0 0 74 74"><rect width="74" height="74" fill="url(#g-dark)"/><path d="M37 13Q46 18 50 29Q49 34 46 37Q48 42 46 47H43Q41 50 37 50T31 47H28Q26 42 28 37Q25 34 24 29Q28 18 37 13Z" fill="#2a8378"/><circle cx="28.500" cy="43.500" r="2.200" fill="#192022"/><circle cx="45.500" cy="43.500" r="2.200" fill="#192022"/><g fill="none" stroke="#2a8378" stroke-width="2" stroke-linecap="round"><path d="M25 14Q10 24 14 43Q18 54 29 57V49M49 14Q64 24 60 43Q56 54 45 57V49"/><path d="M10 26Q4 43 15 54Q23 62 34 63V49M64 26Q70 43 59 54Q51 62 40 63V49"/></g></svg>
        </div>
        <!-- iTerm -->
        <div class="flex flex-col items-center w-24 pt-[15px]">
            <svg class="size-[74px] rounded-[18px]" viewBox="0 0 74 74"><rect width="74" height="74" fill="#aeadb4"/><rect x="2.500" y="2.500" width="69" height="69" rx="15" fill="#050505"/><rect x="8" y="8" width="58" height="58" rx="9" fill="#14211f"/><text x="11" y="26" font-family="Liberation Mono" font-weight="bold" font-size="17" fill="#2fdc4b">$</text><path d="M24 12H31V28H24Z" fill="#0f7a17"/></svg>
        </div>
        <!-- Minecraft -->
        <div class="flex flex-col items-center w-24 pt-[15px]">
            <svg class="size-[74px] rounded-[18px]" viewBox="0 0 74 74"><rect width="74" height="74" fill="#55a53a"/><path d="M14.500 16H29V30H14.500ZM44.500 16H59V30H44.500ZM29 30H44.500V38H52V59H44.500V52H29V59H22V38H29Z"/></svg>
        </div>
        <!-- System Settings -->
        <div class="flex flex-col items-center w-24 pt-[15px]">
            <svg class="size-[74px] rounded-[18px]" viewBox="0 0 74 74" fill="none"><rect width="74" height="74" fill="url(#g-gear)"/><circle cx="37" cy="37" r="31" fill="#4c4c4f"/><circle cx="37" cy="37" r="31" stroke="#333335" stroke-width="3" stroke-dasharray="1.800 1.500"/><circle cx="37" cy="37" r="25" stroke="#b6b6ba" stroke-width="4.500"/><circle cx="37" cy="37" r="22" fill="#515154"/><path d="M37 37H61M37 37 25 16.500M37 37 25 57.500" stroke="#b6b6ba" stroke-width="4"/><circle cx="37" cy="37" r="8" fill="#b6b6ba"/><circle cx="37" cy="37" r="4" fill="#3e3e40"/></svg>
        </div>
        <!-- exec -->
        <div class="flex flex-col items-center w-24 pt-[17px]">
            <svg class="w-[80px] h-[70px]" viewBox="0 0 80 70"><rect x=".7" y=".7" width="78.600" height="68.600" rx="3" fill="#060606" stroke="#b9aec4" stroke-width="1.400"/><rect x="5" y="5" width="70" height="59" fill="#272927"/><text x="10" y="18.500" font-family="DejaVu Sans Mono" font-size="12.500" textLength="29" fill="#3be35d">exec</text></svg>
        </div>
        <div class="w-[45px] pt-[14px]"><div class="w-[2px] h-[83px] ml-[22px] bg-[#74619b]"></div></div>
        <!-- DOCX file -->
        <svg class="w-24 h-[110px]" viewBox="0 0 96 110"><path d="M21 8H52L71 29V81H21Z" fill="#eeeef0"/><path d="M48 8 71 32Q60 30 52 31Q54 18 48 8Z" fill="#fff"/><path d="M48 8 71 32Q60 30 52 31Q54 18 48 8Z" fill="none" stroke="#cfcfd2"/><path d="M30 26H50M30 29H50M30 32H62M30 35H62M30 38H62M30 41H62" stroke="#a9a9ad" stroke-width="1.300"/><rect x="8" y="44" width="77.500" height="23" fill="#fff"/><rect x="12" y="48" width="70" height="15" fill="#1f1f20"/><path d="M12 53H82M12 58H82M26 48V63M47 48V63M64 48V63" stroke="#8b8b8b" stroke-width=".8"/><path d="M30 50.500H43M51 50.500H60M68 50.500H78M30 55.500H43M51 55.500H60M68 55.500H78M30 60.500H43M51 60.500H60M68 60.500H78" stroke="#c9c9c9" stroke-width="1.400"/><path d="M16 50.500H22M16 55.500H22M16 60.500H22" stroke="#8f4b2e" stroke-width="1.200"/><text x="46.500" y="76" text-anchor="middle" font-family="Roboto" font-size="11" textLength="28" fill="#6d6d70">DOCX</text></svg>
        <!-- Minimised Discord window -->
        <svg class="w-24 h-[110px]" viewBox="0 0 96 110"><rect x="5" y="27" width="85" height="51" rx="1.500" fill="#2f3035"/><path d="M5 27H9V78H5ZM9 27H22V78H9Z" fill="#232428"/><path d="M10 29H18M25 29H33M10 32H14M10 37H20M10 41H13M68 29H86M27 34H33M27 36H38M27 40H34M27 42H43M27 46H34M27 48H40M27 50H36M27 52H48M27 57H32M27 60H30M27 64H33M27 67H31M27 71H34M27 75H36" stroke="#77787e" stroke-width="1"/><path d="M24 41H25.500M24 57H25.500" stroke="#d8a45c" stroke-width="2"/><path d="M24 35H25.500M24 47H25.500M24 66H25.500M24 73H25.500M6 33H8M6 37H8" stroke="#c9c9cc" stroke-width="2"/><rect x="61" y="65" width="28" height="28" rx="6.500" fill="#6a6ef4"/><use href="#discord" x="65" y="69" width="20" height="20"/></svg>
        <!-- Minimised editor window -->
        <svg class="w-24 h-[110px]" viewBox="0 0 96 110">
            <clipPath id="c-win"><rect x="4" y="23" width="86" height="58" rx="3"/></clipPath>
            <clipPath id="c-mini"><rect x="61" y="65" width="28" height="28" rx="6.500"/></clipPath>
            <g clip-path="url(#c-win)"><rect x="4" y="23" width="86" height="58" fill="#474548"/><path d="M4 23H25L4 48Z" fill="#d92b97"/><path d="M25 23H31L4 53V48Z" fill="#ea2f35"/><path d="M31 23H35L4 56V53Z" fill="#f27c3d"/><path d="M35 23H40L4 60V56Z" fill="#f3b327"/><path d="M90 44V50L60 81H53Z" fill="#f3b327"/><path d="M90 50V54L64 81H60Z" fill="#f27c3d"/><path d="M90 54V60L70 81H64Z" fill="#ea2f35"/><path d="M90 60V81H70Z" fill="#d92b97"/></g>
            <circle cx="8" cy="27" r="1.200" fill="#f2505a"/><circle cx="12" cy="27" r="1.200" fill="#f3b327"/><circle cx="16" cy="27" r="1.200" fill="#9b8f9b"/>
            <text x="47" y="48" text-anchor="middle" font-family="Inter" font-size="3.500" fill="#b9b9bb">Drop a Video</text><text x="47" y="52.500" text-anchor="middle" font-family="Inter" font-size="3" fill="#b9b9bb">or</text><rect x="41" y="54" width="12" height="5" rx="1.500" fill="#77767a"/><text x="47" y="58" text-anchor="middle" font-family="Inter" font-size="3.500" fill="#dcdcdc">Open</text>
            <g clip-path="url(#c-mini)"><use href="#stripes" x="61" y="65" width="28" height="28"/></g>
        </svg>
        <!-- Trash -->
        <svg class="w-24 h-[110px]" viewBox="0 0 96 110"><ellipse cx="46.500" cy="19" rx="32" ry="7" fill="#58585b"/><path d="M18 17 32 8 40 12 48 9 53 14 60 9 72 14 76 20 60 27H30Z" fill="#ececee"/><path d="M28 20 38 14 45 20 40 26H30Z" fill="#8fb7b8"/><path d="M30 18 35 14 37 21ZM52 22 58 14 68 18 63 26Z" fill="#4c4541"/><path d="M44 12 52 18 46 24Z" fill="#57c4c9"/><path d="M58 17 61 18 59 22Z" fill="#c96a35"/><path d="M14 18Q30 28 46 27Q64 28 79 18L72 86Q68 93 46 93T22 86Z" fill="url(#g-trash)" opacity=".95"/><path d="M22 84Q30 90 46 90T72 84L71 88Q66 93 46 93T22 88Z" fill="#a7a7aa" opacity=".6"/></svg>
    </nav>

    <!-- Mouse pointer -->
    <svg class="absolute left-[184px] top-[178px] w-8 h-[48px]" viewBox="0 0 32 48"><path d="M2 3V37L9.500 30.500 15.500 44 20.500 41.500 15 28.500H27Z" fill="#000" stroke="#fff" stroke-width="2.200"/></svg>
</body>
</html>
